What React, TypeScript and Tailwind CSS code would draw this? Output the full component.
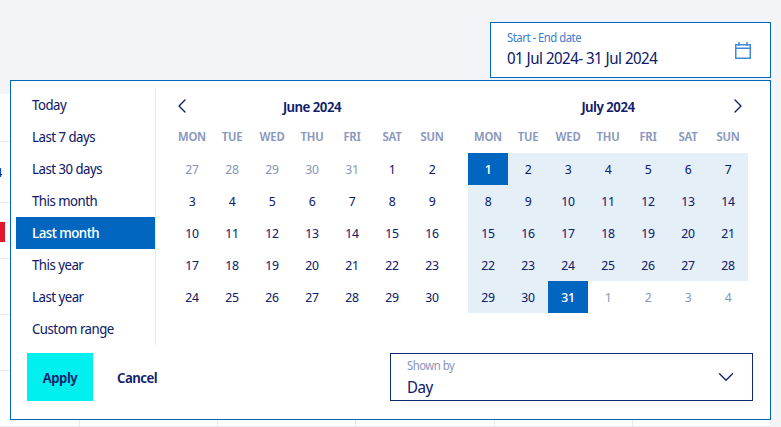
import { ChevronDown, ChevronLeft, ChevronRight } from "lucide-react";

const presets = ["Today", "Last 7 days", "Last 30 days", "This month", "Last month", "This year", "Last year", "Custom range"];
const weekdays = ["MON", "TUE", "WED", "THU", "FRI", "SAT", "SUN"];

const june = [27, 28, 29, 30, 31, 1, 2, 3, 4, 5, 6, 7, 8, 9, 10, 11, 12, 13, 14, 15, 16, 17, 18, 19, 20, 21, 22, 23, 24, 25, 26, 27, 28, 29, 30];
const july = [1, 2, 3, 4, 5, 6, 7, 8, 9, 10, 11, 12, 13, 14, 15, 16, 17, 18, 19, 20, 21, 22, 23, 24, 25, 26, 27, 28, 29, 30, 31, 1, 2, 3, 4];

const rowHeights = ["h-[48px]", "h-[61px]", "h-[56px]", "h-[56px]", "h-[56px]", "h-[56px]"];

function CalendarIcon() {
  return (
    <svg width="16" height="17" viewBox="0 0 16 17" fill="none" stroke="#3f8ad8" strokeWidth="1.5">
      <rect x="0.75" y="2.75" width="14.5" height="13.5" />
      <path d="M1 6.25h14M4 0v4M12 0v4" />
    </svg>
  );
}

function Month({ title, days, firstOut, outFrom, range, nav }: { title: string; days: number[]; firstOut: number; outFrom: number; range?: boolean; nav: "left" | "right" }) {
  return (
    <div className="w-[280px] pt-[2px]">
      <div className="grid h-[30px] grid-cols-[20px_1fr_20px] items-center text-center text-[14px] font-semibold">
        <div className="flex justify-center">{nav === "left" && <ChevronLeft className="h-6 w-6 shrink-0" strokeWidth={1.4} />}</div>
        <div>{title}</div>
        <div className="flex justify-center">{nav === "right" && <ChevronRight className="h-6 w-6 shrink-0" strokeWidth={1.4} />}</div>
      </div>
      <div className="grid h-[32px] grid-cols-[repeat(7,40px)] items-center text-center text-[12px] font-semibold tracking-[-0.2px] text-[#8a97bd]">
        {weekdays.map((d) => (
          <div key={d}>{d}</div>
        ))}
      </div>
      <div className="grid auto-rows-[32px] grid-cols-[repeat(7,40px)] text-center text-[13px] leading-[32px] tracking-[-0.3px]">
        {days.map((d, i) => {
          const out = i < firstOut || i >= outFrom;
          const edge = range && !out && (d === 1 || d === 31);
          let cls = "";
          if (out) cls = "text-[#8a97bd]";
          else if (edge) cls = "bg-[#0066bf] text-white font-medium";
          else if (range) cls = "bg-[#e5eff8]";
          return (
            <div key={i} className={cls}>
              {d}
            </div>
          );
        })}
      </div>
    </div>
  );
}

function BackgroundTable() {
  return (
    <div className="w-[770px] bg-white">
      {rowHeights.map((h, i) => (
        <div key={i} className={"grid grid-cols-[80px_138px_138px_139px_138px_137px] border-b border-[#e6e8f0] " + h}>
          {[0, 1, 2, 3, 4].map((c) => (
            <div key={c} className="relative border-r border-[#e6e8f0]">
              {c === 0 && i === 1 && <div className="-ml-[5px] pt-[20px] text-[13px] font-semibold leading-[20px]">4</div>}
              {c === 0 && i === 2 && <div className="mt-[19px] h-[20px] w-[5px] bg-[#e0182d]" />}
            </div>
          ))}
        </div>
      ))}
    </div>
  );
}

export default function App() {
  return (
    <div className="relative h-[427px] w-[781px] overflow-hidden bg-[#f2f4f8] font-['Noto_Sans_Display','Noto_Sans',sans-serif] tracking-[-0.5px] text-[#10206a]">
      <div className="flex h-[94px] justify-end pr-[10px] pt-[22px]">
        <div className="flex h-[56px] w-[281px] items-center justify-between border border-[#0066bf] bg-white pl-[16px] pr-[19px]">
          <div>
            <div className="text-[12px] leading-[16px] text-[#3f7fd0]">Start - End date</div>
            <div className="text-[16px] leading-[24px]">01 Jul 2024- 31 Jul 2024</div>
          </div>
          <CalendarIcon />
        </div>
      </div>
      <BackgroundTable />

      <div className="absolute left-[10px] top-[80px] h-[340px] w-[761px] border border-[#0066bf] bg-white">
        <div className="flex pl-[5px] pt-[8px]">
          <div className="h-[256px] w-[140px] border-r border-[#e6e8f0]">
            {presets.map((p) => (
              <div key={p} className={"h-[32px] pl-[16px] text-[14px] leading-[32px] " + (p === "Last month" ? "bg-[#0066bf] font-medium text-white" : "")}>
                {p}
              </div>
            ))}
          </div>
          <div className="flex gap-[16px] pl-[16px]">
            <Month title="June 2024" days={june} firstOut={5} outFrom={99} nav="left" />
            <Month title="July 2024" days={july} firstOut={0} outFrom={31} range nav="right" />
          </div>
        </div>
        <div className="mt-[8px] flex items-center pl-[16px]">
          <button className="h-[48px] w-[66px] bg-[#00f0f0] text-[14px] font-semibold">Apply</button>
          <button className="ml-[24px] w-[40px] whitespace-nowrap text-[14px] font-semibold">Cancel</button>
          <div className="ml-[233px] flex h-[48px] w-[363px] items-center justify-between border border-[#0b2a6f] pl-[16px] pr-[13px]">
            <div className="pt-[4px]">
              <div className="text-[12px] leading-[16px] text-[#8a97bd]">Shown by</div>
              <div className="text-[16px] leading-[26px]">Day</div>
            </div>
            <ChevronDown className="h-[26px] w-[26px]" strokeWidth={1.2} />
          </div>
        </div>
      </div>
    </div>
  );
}
